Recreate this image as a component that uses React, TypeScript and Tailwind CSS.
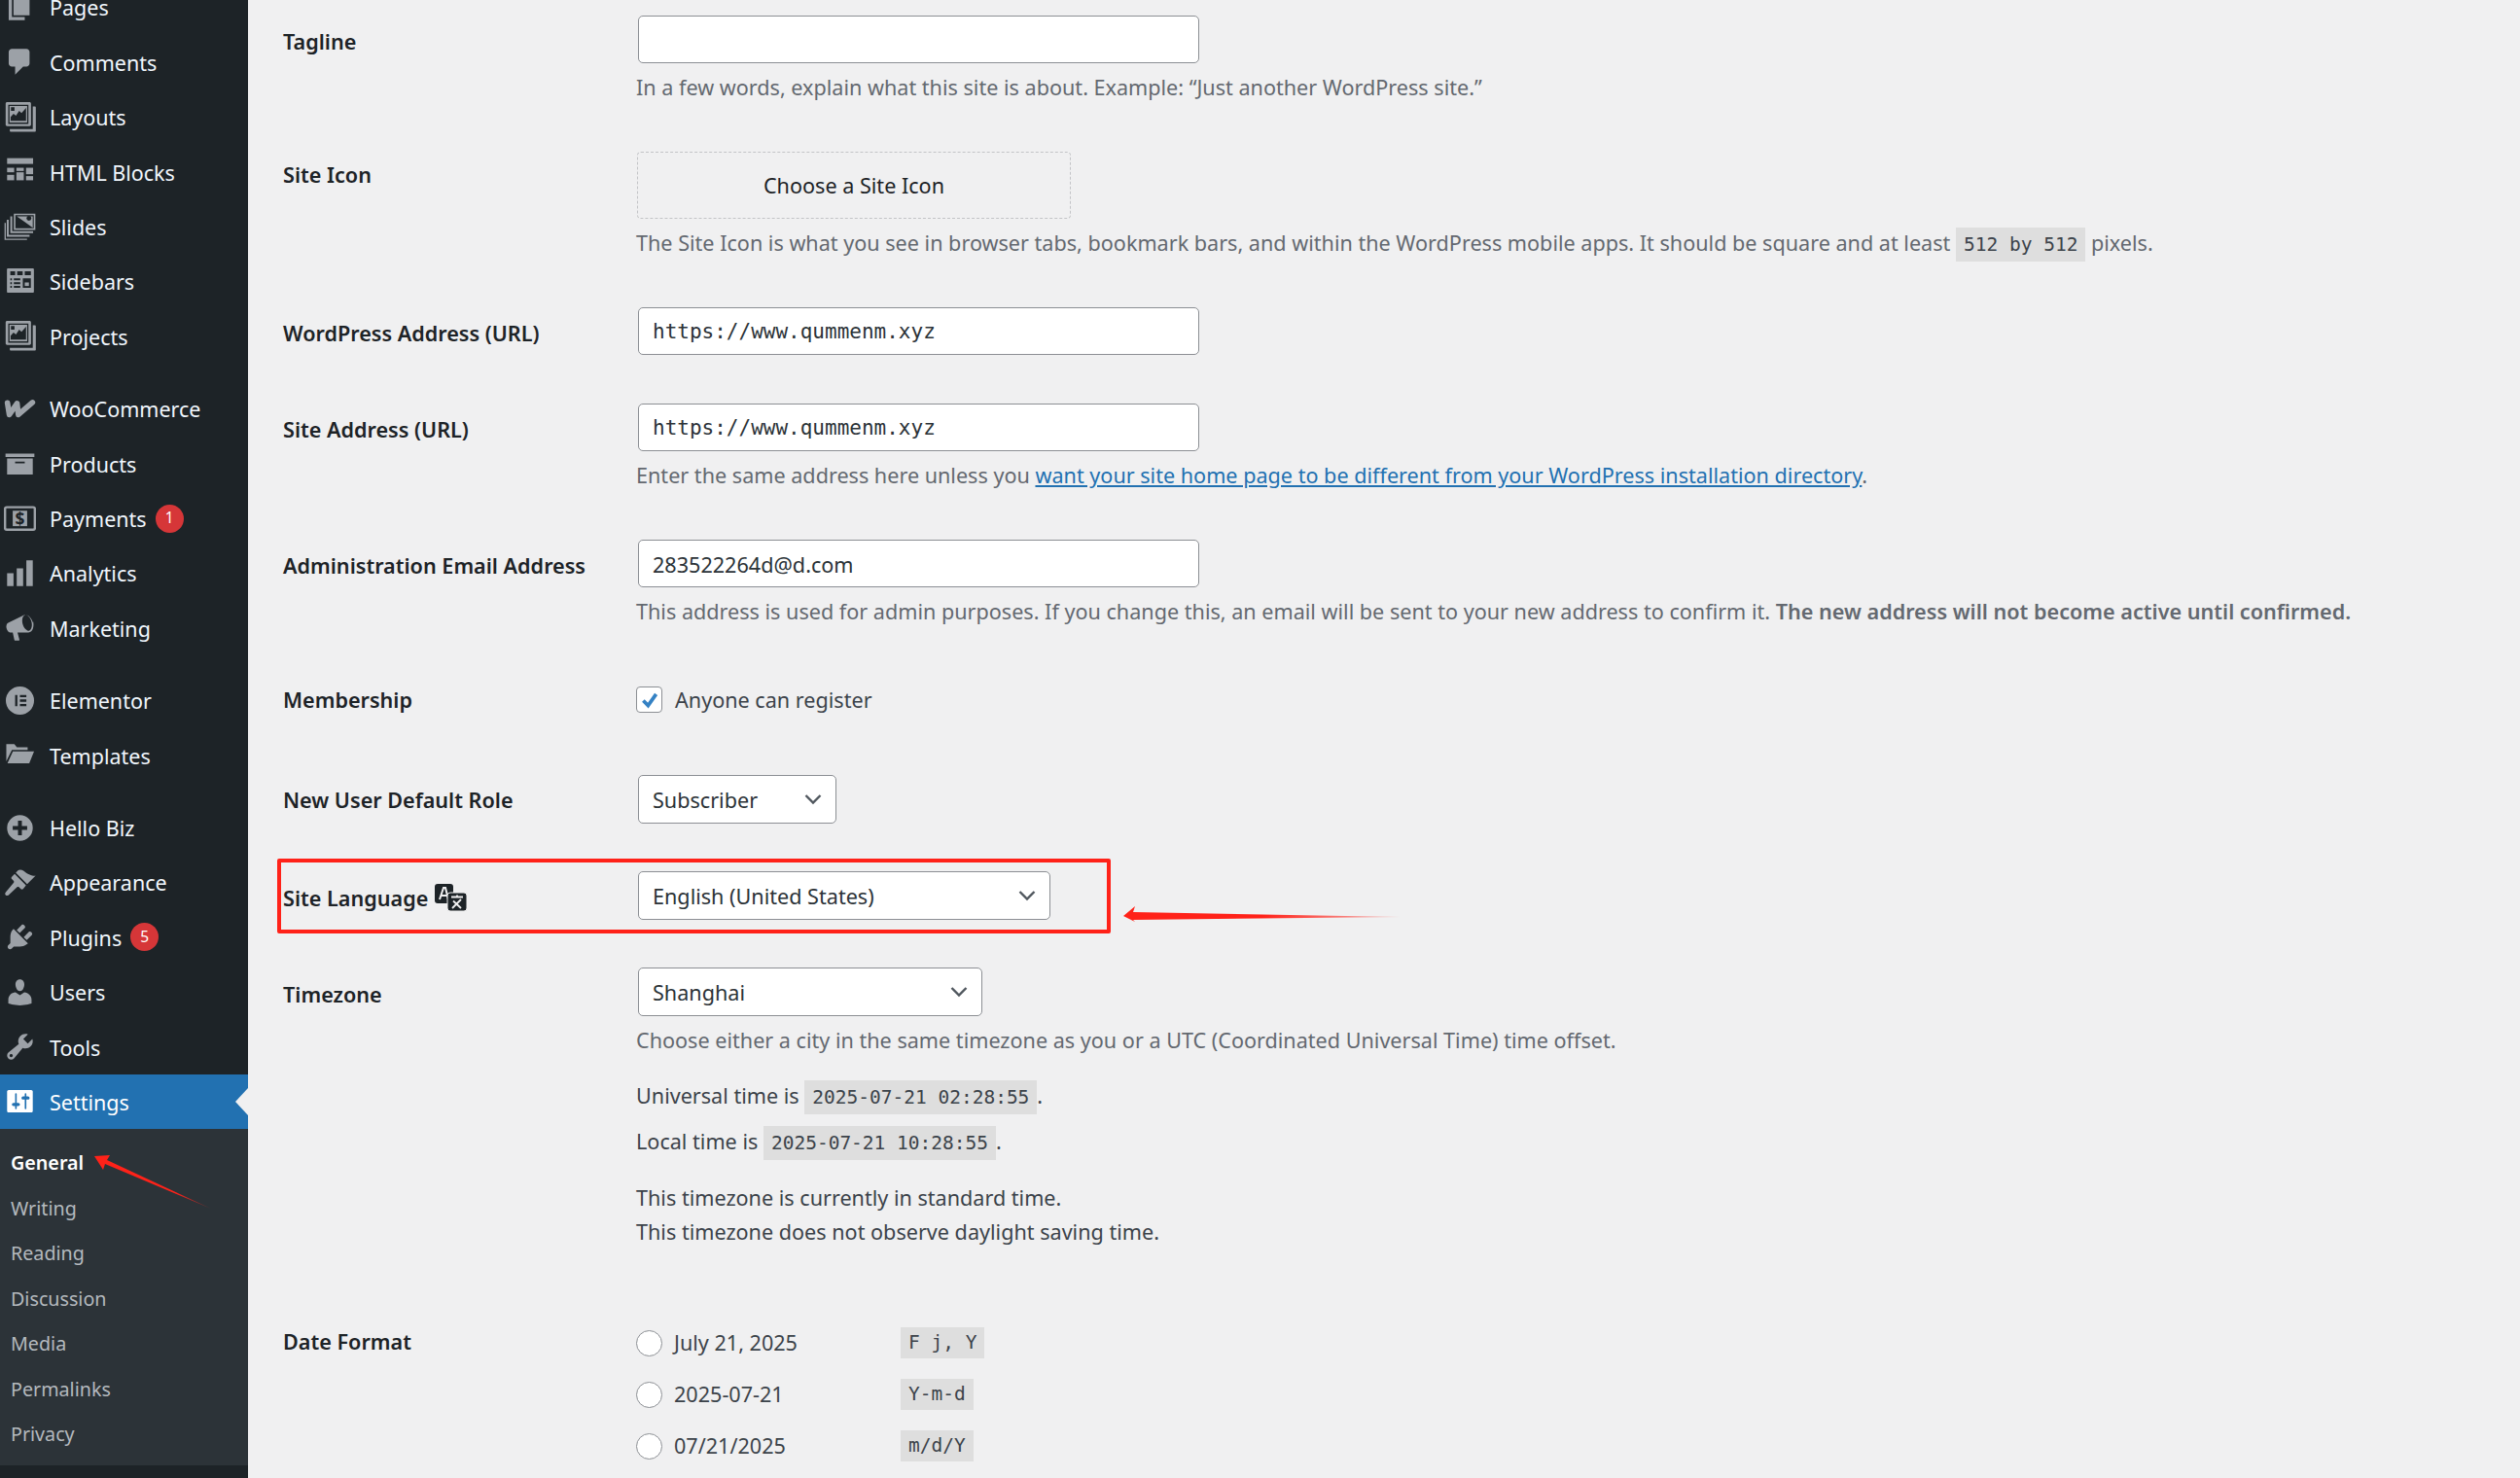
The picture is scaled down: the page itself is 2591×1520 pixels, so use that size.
import type { ReactNode } from 'react'

const gray = 'fill-[#9ca1a7]'

function Dash({ d, white }: { d: string; white?: boolean }) {
  return (
    <svg viewBox="0 0 20 20" className={`w-[33px] h-[33px] ${white ? 'fill-white' : gray}`}>
      <path d={d} fillRule="evenodd" />
    </svg>
  )
}

function Box({ children }: { children: ReactNode }) {
  return (
    <svg viewBox="0 0 20 20" className={`w-[33px] h-[33px] ${gray}`}>
      {children}
    </svg>
  )
}

const paths = {
  pages: 'M6 15V2h10v13H6zm-1 1h8v2H3V5h2v11z',
  comments: 'M5 2h9c1.1 0 2 .9 2 2v7c0 1.1-.9 2-2 2h-2l-5 5v-5H5c-1.1 0-2-.9-2-2V4c0-1.1.9-2 2-2z',
  archive: 'M19 4v2H1V4h18zM2 7h16v10H2V7zm11 3V9H7v1h6z',
  bars: 'M18 18V2h-4v16h4zm-6 0V7H8v11h4zm-6 0v-8H2v8h4z',
  brush:
    'M14.48 11.06L7.41 3.99l1.5-1.5c.5-.56 2.3-.47 3.51.32 1.21.8 1.43 1.28 2.91 2.1 1.18.64 2.45 1.26 4.45.85zm-.71.71L6.7 4.7 4.93 6.47c-.39.39-.39 1.02 0 1.41l1.06 1.06c.39.39.39 1.03 0 1.42L1.3 15.9c-.7.7-.7 1.5-.2 2s1.3.5 2 -.2l5-4.7c.39-.39 1.02-.39 1.41 0l1.06 1.06c.39.39 1.02.39 1.41 0z',
  plug: 'M13.11 4.36L9.87 7.6 8 5.73l3.24-3.24c.35-.34 1.05-.2 1.56.32.52.51.66 1.21.31 1.55zm-8 1.77l.91-1.12 9.01 9.01-1.19.84c-.71.71-2.63 1.16-3.82 1.16H6.14L4.9 17.26c-.59.59-1.54.59-2.12 0-.59-.58-.59-1.53 0-2.12l1.24-1.24v-3.88c0-1.13.4-3.19 1.09-3.89zm7.26 3.97l3.24-3.24c.34-.35 1.04-.21 1.55.31.52.51.66 1.21.31 1.55l-3.24 3.25z',
  user: 'M10 9.25c-2.27 0-2.73-3.44-2.73-3.44C7 4.02 7.82 2 9.97 2c2.16 0 2.98 2.02 2.71 3.81 0 0-.41 3.44-2.68 3.44zm0 2.57L12.72 10c2.39 0 4.52 2.33 4.52 4.53v2.49s-3.65 1.13-7.24 1.13c-3.65 0-7.24-1.13-7.24-1.13v-2.49c0-2.25 1.94-4.48 4.47-4.48z',
  wrench:
    'M16.68 9.77c-1.34 1.34-3.3 1.67-4.95.99l-5.41 6.52c-.99.99-2.59.99-3.58 0s-.99-2.59 0-3.57l6.52-5.42c-.68-1.65-.35-3.61.99-4.95 1.28-1.28 3.12-1.62 4.72-1.06l-2.89 2.89 2.82 2.82 2.86-2.87c.53 1.58.18 3.39-1.08 4.65zM3.81 16.21c.4.39 1.04.39 1.43 0 .4-.4.4-1.04 0-1.43-.39-.4-1.03-.4-1.43 0-.39.39-.39 1.03 0 1.43z',
  settings:
    'M18 16V4c0-.55-.45-1-1-1H3c-.55 0-1 .45-1 1v12c0 .55.45 1 1 1h14c.55 0 1-.45 1-1zM8 11h1c.55 0 1 .45 1 1s-.45 1-1 1H8v1.5c0 .28-.22.5-.5.5s-.5-.22-.5-.5V13H6c-.55 0-1-.45-1-1s.45-1 1-1h1V5.5c0-.28.22-.5.5-.5s.5.22.5.5V11zm5-2h-1c-.55 0-1-.45-1-1s.45-1 1-1h1V5.5c0-.28.22-.5.5-.5s.5.22.5.5V7h1c.55 0 1 .45 1 1s-.45 1-1 1h-1v5.5c0 .28-.22.5-.5.5s-.5-.22-.5-.5V9z',
  megaphone:
    'M18.15 5.94c.46 1.62.38 3.22-.02 4.48-.42 1.28-1.26 2.18-2.3 2.48-.16.06-.26.06-.4.06-.06.02-.12.02-.18.02-.06.02-.14.02-.22.02H8.5l1.2 4.6c.02.14-.06.26-.14.34-.08.1-.24.16-.34.16H7c-.1 0-.26-.06-.34-.16-.08-.08-.16-.2-.14-.34l-1-4.6H4.25c-.5.06-1.08-.18-1.54-.62s-.88-1.08-1.06-1.88c-.24-.8-.2-1.56-.02-2.2.18-.62.58-1.08 1.06-1.3l9-4.4c.1-.06.18-.1.24-.16.06-.04.14-.08.24-.12.16-.08.28-.12.5-.18 1.04-.3 2.24.1 3.22 1 .98.88 1.8 2.24 2.26 3.86zm-2.6 5.98c.4-.1.74-.34 1.04-.7.58-.7.86-1.76.86-3.04 0-.64-.1-1.3-.28-1.98-.34-1.36-1.02-2.5-1.78-3.24-.38-.38-.8-.64-1.18-.78-.38-.14-.74-.2-1.08-.1-.34.1-.6.34-.86.66-.56.68-.84 1.74-.84 3.04 0 .62.08 1.3.28 1.98.34 1.34 1 2.48 1.76 3.22.4.4.8.66 1.2.8.42.14.78.2 1.12.14z',
  folder:
    'M1.5 3.2h5l1.6 2h6.7v1.6H5L1.5 14zM5.6 7.8h13.2l-3 7.4H2.2z',
}

function Gallery() {
  return (
    <Box>
      <path
        fillRule="evenodd"
        d="M2 .6h14c.5 0 .9.4.9.9v13.2c0 .5-.4.9-.9.9H2c-.5 0-.9-.4-.9-.9V1.500c0-.5.4-.9.9-.9zM2.700 2.200v12h12.600v-12z"
      />
      <path
        fillRule="evenodd"
        d="M3.500 3h11v10.400h-11zM4.200 12.200h9.600V4.200l-2.800 3.200-1.500-1.300-2 3-1.500-1.200-1.800 2zM4.400 3.800h2.200V6H4.400z"
      />
      <path d="M18 3.400h1.400c.3 0 .5.2.5.5v14.700c0 .3-.2.5-.5.5H4.200c-.3 0-.5-.2-.5-.5v-1.200h14.300z" />
    </Box>
  )
}

function WidgetGrid() {
  return (
    <Box>
      <rect x="2" y="1.600" width="16.200" height="3.600" />
      <rect x="2" y="7.600" width="4.400" height="2.800" />
      <rect x="2" y="12" width="4.400" height="3.400" />
      <rect x="7.800" y="7.600" width="4.600" height="2" />
      <rect x="7.800" y="10.400" width="4.600" height="5" />
      <rect x="13.800" y="7.600" width="4.400" height="4" />
      <rect x="13.800" y="12.800" width="4.400" height="2.600" />
    </Box>
  )
}

function SlidesIcon() {
  return (
    <Box>
      <path
        fillRule="evenodd"
        d="M6.200 1.600h13.400v10.200H6.200zM7.200 2.600v8.200h11.400V2.600zM8 3.400h10v7l-5-3.600z"
      />
      <circle cx="15.600" cy="4.600" r="1.500" fill="#1d2327" />
      <path d="M4 3.400h1.200v9.200h13v1.200H4zM1.800 5.400H3v9.400h13V16H1.800zM.4 7.400h.8v9.800h13.200v.8H.4z" />
    </Box>
  )
}

function SidebarsIcon() {
  return (
    <Box>
      <path
        fillRule="evenodd"
        d="M2.600 1.800h15.400c.4 0 .7.3.7.7v13.800c0 .4-.3.7-.7.7H2.600c-.4 0-.7-.3-.7-.7V2.500c0-.4.3-.7.7-.7zM4 3.600V6h3V3.600zM8.300 3.600V6h3.400V3.600zM13 3.600V6h3.800V3.600zM4 8v1.200h1V8zM6.200 8v1.200h4V8zM4 10.400v1.200h1v-1.200zM6.200 10.400v1.200h4v-1.200zM4 12.800V14h1v-1.200zM6.200 12.800V14h4v-1.200zM11.800 8v6h5V8z"
      />
      <rect x="13" y="10.600" width="2.600" height="2.200" />
    </Box>
  )
}

function WooIcon() {
  return (
    <svg viewBox="0 0 20 20" className="w-[33px] h-[33px]">
      <path
        d="M2.200 6.200 3.400 13.600 8.200 6.600 9 13.600 17.800 6"
        fill="none"
        stroke="#9ca1a7"
        strokeWidth="3.400"
        strokeLinejoin="round"
        strokeLinecap="round"
      />
    </svg>
  )
}

function PaymentsIcon() {
  return (
    <svg viewBox="0 0 20 20" className="w-[33px] h-[33px]">
      <rect x="0.700" y="2.800" width="18.600" height="14" rx="1" fill="none" stroke="#9ca1a7" strokeWidth="1.500" />
      <rect x="5.500" y="5" width="9" height="9.600" fill="#9ca1a7" />
      <text x="10" y="13.700" textAnchor="middle" fontSize="10.500" fontWeight="700" fontFamily="Noto Sans, sans-serif" fill="#1d2327">
        $
      </text>
    </svg>
  )
}

function ElementorIcon() {
  return (
    <Box>
      <path
        fillRule="evenodd"
        d="M10 1.200a8.800 8.800 0 1 1 0 17.600 8.800 8.800 0 0 1 0-17.600zM7 6.500v7h1.400v-7zM10 6.500v1.400h4V6.500zM10 9.300v1.400h4V9.300zM10 12.100v1.400h4v-1.400z"
      />
    </Box>
  )
}

function PlusIcon() {
  return (
    <Box>
      <path
        fillRule="evenodd"
        d="M10 2a8 8 0 1 1 0 16 8 8 0 0 1 0-16zM8.800 5.500v3.300H5.500v2.400h3.300v3.300h2.400v-3.300h3.300V8.800h-3.300V5.500z"
      />
    </Box>
  )
}

type Item = { label: string; icon: ReactNode; badge?: string; gap?: boolean }

const menu: Item[] = [
  { label: 'Pages', icon: <Dash d={paths.pages} /> },
  { label: 'Comments', icon: <Dash d={paths.comments} /> },
  { label: 'Layouts', icon: <Gallery /> },
  { label: 'HTML Blocks', icon: <WidgetGrid /> },
  { label: 'Slides', icon: <SlidesIcon /> },
  { label: 'Sidebars', icon: <SidebarsIcon /> },
  { label: 'Projects', icon: <Gallery /> },
  { label: 'WooCommerce', icon: <WooIcon />, gap: true },
  { label: 'Products', icon: <Dash d={paths.archive} /> },
  { label: 'Payments', icon: <PaymentsIcon />, badge: '1' },
  { label: 'Analytics', icon: <Dash d={paths.bars} /> },
  { label: 'Marketing', icon: <Dash d={paths.megaphone} /> },
  { label: 'Elementor', icon: <ElementorIcon />, gap: true },
  { label: 'Templates', icon: <Dash d={paths.folder} /> },
  { label: 'Hello Biz', icon: <PlusIcon />, gap: true },
  { label: 'Appearance', icon: <Dash d={paths.brush} /> },
  { label: 'Plugins', icon: <Dash d={paths.plug} />, badge: '5' },
  { label: 'Users', icon: <Dash d={paths.user} /> },
  { label: 'Tools', icon: <Dash d={paths.wrench} /> },
]

const submenu = ['General', 'Writing', 'Reading', 'Discussion', 'Media', 'Permalinks', 'Privacy']

function Sidebar() {
  return (
    <aside className="w-[255px] h-[1520px] shrink-0 bg-[#1d2327] overflow-hidden">
      <div className="-mt-[20.6px] text-[21.5px] text-[#f0f6fc]">
        {menu.map((m) => (
          <div key={m.label} className={`h-[56.4px] flex items-center ${m.gap ? 'mt-[18px]' : ''}`}>
            <div className="w-[51px] pl-[4px] flex">{m.icon}</div>
            <span className="pt-[2px]">{m.label}</span>
            {m.badge && (
              <span className="ml-[9px] w-[29px] h-[29px] rounded-full bg-[#d63638] text-white text-[15.5px] flex items-center justify-center">
                {m.badge}
              </span>
            )}
          </div>
        ))}
        <div className="relative h-[56px] bg-[#2271b1] text-white flex items-center">
          <div className="w-[51px] pl-[4px] flex">
            <Dash d={paths.settings} white />
          </div>
          <span className="pt-[2px]">Settings</span>
          <div className="absolute right-0 top-[14px] w-0 h-0 border-y-[14px] border-y-transparent border-r-[13px] border-r-[#f0f0f1]" />
        </div>
        <div className="h-[346px] pt-[12px] bg-[#2c3338] text-[#b4b9be] text-[19.7px]">
          {submenu.map((s, i) => (
            <div key={s} className={`h-[46.5px] flex items-center pl-[11px] ${i === 0 ? 'text-white font-semibold' : ''}`}>
              {s}
            </div>
          ))}
        </div>
      </div>
    </aside>
  )
}

function Code({ children }: { children: ReactNode }) {
  return (
    <code className="bg-[#dedede] px-[8px] py-[6px] leading-none text-[19.5px] font-['DejaVu_Sans_Mono',monospace] text-[#3c434a]">
      {children}
    </code>
  )
}

function Desc({ className, children }: { className: string; children: ReactNode }) {
  return <p className={`leading-[32px] text-[#646970] ${className}`}>{children}</p>
}

function TextInput({ value, mono }: { value: string; mono?: boolean }) {
  return (
    <input
      readOnly
      value={value}
      className={`block ml-[2px] w-[577px] h-[49px] px-[14px] bg-white border border-[#8c8f94] rounded-[5px] text-[#2c3338] ${
        mono ? "font-['DejaVu_Sans_Mono',monospace] text-[21px]" : 'pt-[2px]'
      }`}
    />
  )
}

function Select({ value, className }: { value: string; className: string }) {
  return (
    <div className={`ml-[2px] h-[50px] pl-[14px] pr-[14px] bg-white border border-[#8c8f94] rounded-[5px] text-[#2c3338] flex items-center justify-between ${className}`}>
      <span className="pt-[2px]">{value}</span>
      <svg viewBox="0 0 18 12" className="w-[18px] h-[12px]">
        <path d="M1.500 2 9 9.500 16.500 2" fill="none" stroke="#50575e" strokeWidth="2.400" />
      </svg>
    </div>
  )
}

function Row({ label, labelClass, className, children, extra }: { label: string; labelClass: string; className: string; children: ReactNode; extra?: ReactNode }) {
  return (
    <div className={`relative grid grid-cols-[363px_1fr] ${className}`}>
      <div className={`flex items-start leading-[32px] font-semibold text-[#1d2327] ${labelClass}`}>
        {label}
        {extra}
      </div>
      <div>{children}</div>
    </div>
  )
}

function Radio({ label, code, top }: { label: string; code: string; top: string }) {
  return (
    <div className={`flex items-center h-[34px] ${top}`}>
      <div className="w-[27px] h-[27px] rounded-full bg-white border border-[#8c8f94]" />
      <span className="ml-[12px] w-[233px] text-[#3c434a]">{label}</span>
      <Code>{code}</Code>
    </div>
  )
}

function TranslateIcon() {
  return (
    <svg viewBox="0 0 33 28" className="w-[33px] h-[28px] ml-[7px] mt-[1px]">
      <rect x="0" y="0" width="19" height="20" rx="3" fill="#1d2327" />
      <path d="M5 16 9 4h2l3 12M6.500 12h6" fill="none" stroke="#f0f0f1" strokeWidth="2" />
      <rect x="13" y="9" width="20" height="19" rx="3" fill="#1d2327" stroke="#f0f0f1" strokeWidth="1" />
      <path d="M17 13.500h12M23 11.500v2M19 17.500 27 25M27 16 18 25" fill="none" stroke="#f0f0f1" strokeWidth="1.800" />
    </svg>
  )
}

function Arrows() {
  return (
    <svg viewBox="0 0 2591 1520" className="absolute inset-0 w-[2591px] h-[1520px] pointer-events-none">
      <defs>
        <linearGradient id="fadeA" x1="1155" y1="0" x2="1440" y2="0" gradientUnits="userSpaceOnUse">
          <stop offset="0.5" stopColor="#ff2219" />
          <stop offset="1" stopColor="#ff2219" stopOpacity="0.25" />
        </linearGradient>
        <linearGradient id="fadeB" x1="97" y1="1189" x2="217" y2="1243" gradientUnits="userSpaceOnUse">
          <stop offset="0.7" stopColor="#ff2219" />
          <stop offset="1" stopColor="#b02a2a" stopOpacity="0.5" />
        </linearGradient>
      </defs>
      <polygon points="1155,942 1167,932 1165,938 1440,943 1165,946 1167,948" fill="url(#fadeA)" />
      <polygon points="97,1189 113,1188 110,1193 217,1243 108,1197 106,1203" fill="url(#fadeB)" />
    </svg>
  )
}

export default function App() {
  return (
    <div className="relative flex w-[2591px] h-[1520px] overflow-hidden bg-[#f0f0f1] font-['Noto_Sans',sans-serif] text-[21.6px]">
      <Sidebar />
      <main className="flex-1 pl-[36px] pt-[16px]">
        <Row label="Tagline" labelClass="mt-[11px]" className="">
          <TextInput value="" />
          <Desc className="mt-[9px]">In a few words, explain what this site is about. Example: “Just another WordPress site.”</Desc>
        </Row>

        <Row label="Site Icon" labelClass="mt-[8px]" className="mt-[50px]">
          <div className="w-[446px] h-[69px] ml-[1px] pt-[2px] border border-dashed border-[#c3c4c7] rounded-[4px] flex items-center justify-center text-[#1d2327]">
            Choose a Site Icon
          </div>
          <Desc className="mt-[9px]">
            The Site Icon is what you see in browser tabs, bookmark bars, and within the WordPress mobile apps. It should be square and at least <Code>512 by 512</Code> pixels.
          </Desc>
        </Row>

        <Row label="WordPress Address (URL)" labelClass="mt-[11px]" className="mt-[50px]">
          <TextInput value="https://www.qummenm.xyz" mono />
        </Row>

        <Row label="Site Address (URL)" labelClass="mt-[11px]" className="mt-[50px]">
          <TextInput value="https://www.qummenm.xyz" mono />
          <Desc className="mt-[9px]">
            Enter the same address here unless you <a className="text-[#2271b1] underline">want your site home page to be different from your WordPress installation directory</a>.
          </Desc>
        </Row>

        <Row label="Administration Email Address" labelClass="mt-[11px]" className="mt-[50px]">
          <TextInput value="283522264d@d.com" />
          <Desc className="mt-[9px]">
            This address is used for admin purposes. If you change this, an email will be sent to your new address to confirm it. <b className="font-semibold">The new address will not become active until confirmed.</b>
          </Desc>
        </Row>

        <Row label="Membership" labelClass="-mt-[2px]" className="mt-[61px] h-[27px]">
          <div className="flex items-center h-[27px] text-[#3c434a]">
            <div className="w-[27px] h-[27px] rounded-[4px] bg-white border border-[#8c8f94] flex items-center justify-center">
              <svg viewBox="0 0 20 20" className="w-[22px] h-[22px]">
                <path d="M4 10.500 8.500 15 16 4.500" fill="none" stroke="#3582c4" strokeWidth="3.400" />
              </svg>
            </div>
            <span className="ml-[13px] pt-[2px]">Anyone can register</span>
          </div>
        </Row>

        <Row label="New User Default Role" labelClass="mt-[10px]" className="mt-[64px]">
          <Select value="Subscriber" className="w-[204px]" />
        </Row>

        <Row
          label="Site Language"
          labelClass="mt-[12px]"
          className="mt-[49px]"
          extra={<TranslateIcon />}
        >
          <Select value="English (United States)" className="w-[424px]" />
          <div className="absolute -left-[6px] -top-[13px] w-[857px] h-[77px] border-[4px] border-[#ff2219] rounded-[2px]" />
        </Row>

        <Row label="Timezone" labelClass="mt-[12px]" className="mt-[49px]">
          <Select value="Shanghai" className="w-[354px]" />
          <Desc className="mt-[9px]">Choose either a city in the same timezone as you or a UTC (Coordinated Universal Time) time offset.</Desc>
          <p className="mt-[25px] leading-[32px] text-[#3c434a]">Universal time is <Code>2025-07-21 02:28:55</Code>.</p>
          <p className="mt-[15px] leading-[32px] text-[#3c434a]">Local time is <Code>2025-07-21 10:28:55</Code>.</p>
          <p className="mt-[26px] leading-[32px] text-[#3c434a]">This timezone is currently in standard time.</p>
          <p className="mt-[3px] leading-[32px] text-[#3c434a]">This timezone does not observe daylight saving time.</p>
        </Row>

        <Row label="Date Format" labelClass="mt-0" className="mt-[81px]">
          <Radio label="July 21, 2025" code="F j, Y" top="" />
          <Radio label="2025-07-21" code="Y-m-d" top="mt-[19px]" />
          <Radio label="07/21/2025" code="m/d/Y" top="mt-[19px]" />
        </Row>
      </main>
      <Arrows />
    </div>
  )
}
